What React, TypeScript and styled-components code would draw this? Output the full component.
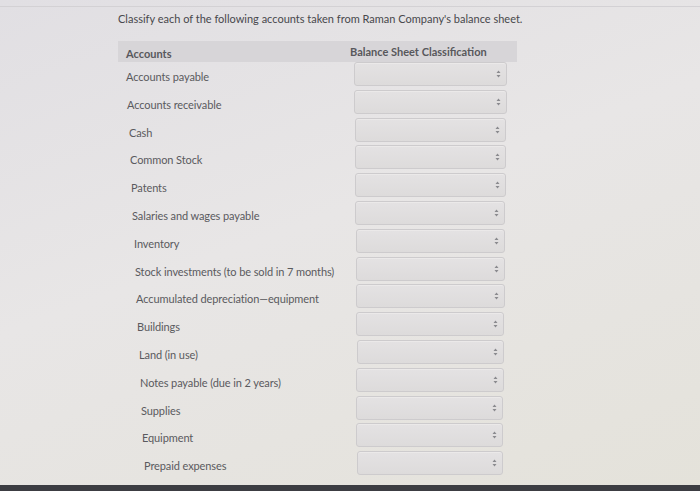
import React from 'react';
import styled, { createGlobalStyle } from "styled-components";

const accounts = [
    'Accounts payable',
    'Accounts receivable',
    'Cash',
    'Common Stock',
    'Patents',
    'Salaries and wages payable',
    'Inventory',
    'Stock investments (to be sold in 7 months)',
    'Accumulated depreciation\u2014equipment',
    'Buildings',
    'Land (in use)',
    'Notes payable (due in 2 years)',
    'Supplies',
    'Equipment',
    'Prepaid expenses',
];

const GlobalStyle = createGlobalStyle`
    html, body {
        margin: 0;
        height: 100%;
    }
    body {
        font-family: Lato, "Open Sans", sans-serif;
        background: linear-gradient(160deg, #e1dfe3 0%, #e8e6e6 45%, #e4e2da 100%);
        overflow: hidden;
    }
`

const Screen = styled.div`
    display: flex;
    flex-direction: column;
    box-sizing: border-box;
    border-top: 1px solid #d3d1d4;
    margin-top: 6px;
    height: 485px;
`
const Page = styled.div`
    flex: 1;
    padding: 5px 0 0 118px;
`
const Title = styled.p`
    margin: 0 0 16px 0;
    font-size: 11px;
    color: #48484c;
`
const Table = styled.div`
    width: 399px;
`
const HeaderRow = styled.div`
    display: grid;
    grid-template-columns: 232px 1fr;
    height: 21px;
    background: #d7d5d8;
    font-size: 11px;
    font-weight: 700;
    color: #58585c;
`
const HeadCell = styled.div<{ $shift: number; $pad: number }>`
    padding-left: ${p => p.$pad}px;
    padding-top: ${p => p.$shift}px;
    display: flex;
    align-items: center;
`
const Row = styled.div<{ $indent: number }>`
    display: grid;
    grid-template-columns: 236px 1fr;
    height: 27.8px;
    padding-left: ${p => p.$indent}px;
`
const Label = styled.div`
    font-size: 11px;
    color: #5a5a5e;
    padding: 8px 0 0 8px;
    white-space: nowrap;
    letter-spacing: -0.1px;
`
const Select = styled.div<{ $left: number; $right: number }>`
    height: 24px;
    margin: 0 ${p => p.$right}px 0 ${p => p.$left}px;
    box-sizing: border-box;
    border: 1px solid #cdcbcd;
    border-radius: 3px;
    background: linear-gradient(#e4e2e3, #dddbdb);
    box-shadow: inset 0 1px 0 #ebe9e9;
    display: flex;
    align-items: center;
    justify-content: flex-end;
    padding-right: 5px;
`
const BottomBar = styled.div`
    height: 6px;
    background: #3c3d42;
`

const Arrows = () => (
    <svg width="5" height="8" viewBox="0 0 5 8">
        <path d="M2.5 0.5 L4.5 3 L0.5 3 Z M0.5 5 L4.5 5 L2.5 7.5 Z" fill="#8a8a8e"/>
    </svg>
);

export default function App() {
    return (
        <>
            <GlobalStyle/>
            <Screen>
                <Page>
                    <Title>Classify each of the following accounts taken from Raman Company's balance sheet.</Title>
                    <Table>
                        <HeaderRow>
                            <HeadCell $shift={3} $pad={8}>Accounts</HeadCell>
                            <HeadCell $shift={-2} $pad={0}>Balance Sheet Classification</HeadCell>
                        </HeaderRow>
                        {accounts.map((name, i) => (
                            <Row key={name} $indent={Math.round(i * 1.25)}>
                                <Label>{name}</Label>
                                <Select $left={Math.round(i * 0.2 - i * 1.25)} $right={10 + Math.round(i * 0.3)}>
                                    <Arrows/>
                                </Select>
                            </Row>
                        ))}
                    </Table>
                </Page>
                <BottomBar/>
            </Screen>
        </>
    );
}
